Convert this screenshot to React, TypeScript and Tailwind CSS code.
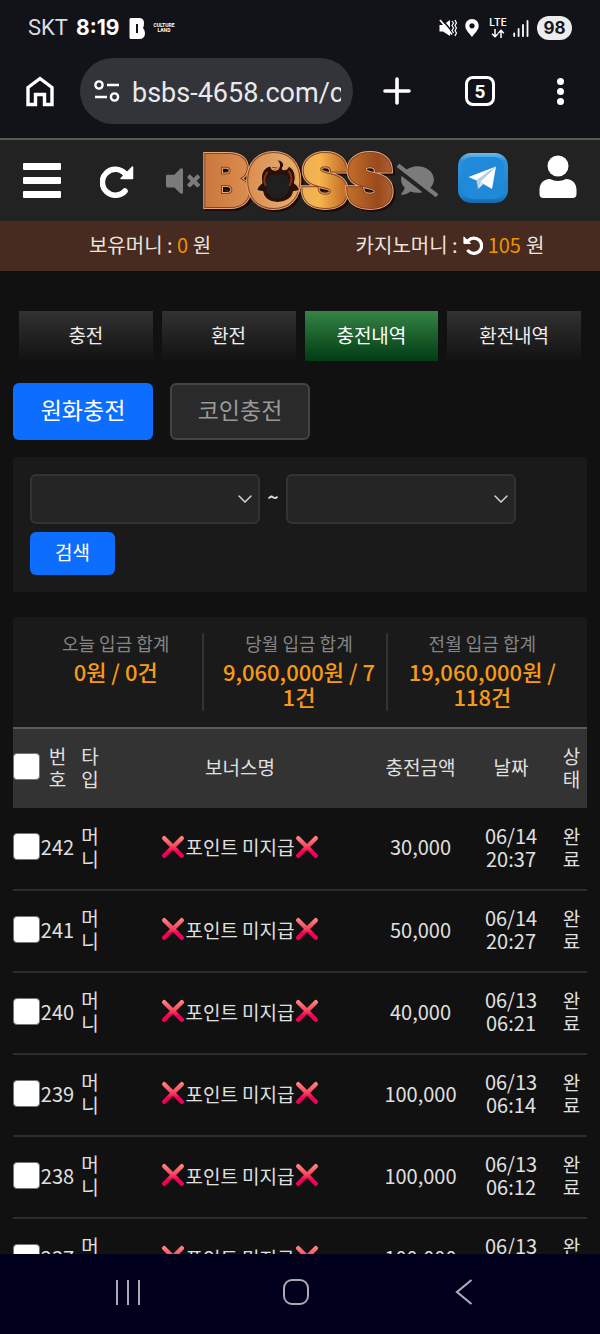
import React, { useState } from "react";
import { FaCommentSlash, FaVolumeMute } from "react-icons/fa";

const menuTabs = ["충전", "환전", "충전내역", "환전내역"];

const totals = [
  { label: "오늘 입금 합계", value: "0원 / 0건" },
  { label: "당월 입금 합계", value: "9,060,000원 / 71건" },
  { label: "전월 입금 합계", value: "19,060,000원 / 118건" },
];

const deposits = [
  { id: 242, amount: 30000, day: "06/14", time: "20:37" },
  { id: 241, amount: 50000, day: "06/14", time: "20:27" },
  { id: 240, amount: 40000, day: "06/13", time: "06:21" },
  { id: 239, amount: 100000, day: "06/13", time: "06:14" },
  { id: 238, amount: 100000, day: "06/13", time: "06:12" },
  { id: 237, amount: 100000, day: "06/13", time: "06:10" },
];

const ReloadIcon = ({ className }: { className?: string }) => (
  <svg viewBox="0 0 34 34" className={className} aria-hidden="true">
    <path
      d="M25 9.500 A13 13 0 1 0 25 27"
      fill="none"
      stroke="currentColor"
      strokeWidth="5.600"
      strokeLinecap="round"
    />
    <path
      d="M32.500 3 V14.500 H21 L24 11.500 L27 8.500 Z"
      fill="currentColor"
      stroke="currentColor"
      strokeWidth="1.500"
      strokeLinejoin="round"
    />
  </svg>
);

const CrossMark = () => (
  <svg viewBox="0 0 24 24" className="size-6 shrink-0" role="img" aria-label="X">
    <defs>
      <linearGradient id="cross" x1="0" y1="1" x2="0" y2="23" gradientUnits="userSpaceOnUse">
        <stop offset="0" stopColor="#ff8a80" />
        <stop offset="0.5" stopColor="#f8405c" />
        <stop offset="0.7" stopColor="#f50057" />
      </linearGradient>
    </defs>
    <path d="M3.2 3.2 L20.8 20.8 M20.8 3.2 L3.2 20.8" stroke="url(#cross)" strokeWidth="4.4" strokeLinecap="round" />
  </svg>
);

const BossLogo = () => {
  const letters = [
    { char: "B", x: 0 },
    { char: "O", x: 44 },
    { char: "S", x: 99 },
    { char: "S", x: 144 },
  ];

  return (
    <svg viewBox="0 0 195 60" className="w-full overflow-visible" role="img" aria-label="BOSS">
      <defs>
        <linearGradient id="copper" x1="0" y1="0" x2="195" y2="0" gradientUnits="userSpaceOnUse">
          <stop offset="0" stopColor="#c9763c" />
          <stop offset="0.2" stopColor="#d98a4d" />
          <stop offset="0.4" stopColor="#e3a468" />
          <stop offset="0.6" stopColor="#f5b64c" />
          <stop offset="0.72" stopColor="#c9742c" />
          <stop offset="0.9" stopColor="#9a4a1c" />
          <stop offset="1" stopColor="#b4683c" />
        </linearGradient>
      </defs>
      <g fontFamily="Inter, sans-serif" fontWeight="900" fontSize="70">
        {letters.map((l, i) => (
          <g key={i}>
            <text x={l.x + 2} y="57" fill="#1c0a05" stroke="#1c0a05" strokeWidth="6" aria-hidden="true">
              {l.char}
            </text>
            <text x={l.x} y="55" fill="#e2a878" stroke="#e2a878" strokeWidth="6" aria-hidden="true">
              {l.char}
            </text>
            <text x={l.x} y="55" fill="#8d4322" stroke="#8d4322" strokeWidth="4" aria-hidden="true">
              {l.char}
            </text>
            <text x={l.x} y="55" fill="url(#copper)" stroke="url(#copper)" strokeWidth="2">
              {l.char}
            </text>
          </g>
        ))}
      </g>
      {/* devil mask inside the O */}
      <path
        d="M74 9 C80 8 83 14 80 17 C79 19 84 20 86 15 C93 18 94 27 92 32 C95 34 97 37 97 40 L91 41 C90 48 82 52 75 52 C67 52 61 48 60 41 L54 40 C54 36 56 34 59 32 C57 23 61 15 69 15 C67 19 74 21 76 17 C78 14 76 11 74 9 Z"
        fill="#2a0f08"
        stroke="#e0a06c"
        strokeWidth="1.4"
      />
      <path d="M75 24 C83 22 88 27 87 34 C87 43 81 48 75 48 C68 48 63 42 63 34 C63 27 68 22 75 24 Z" fill="#1f1f1f" />
      <path d="M65 21 C61 26 61 31 63 35 M86 20 C90 25 89 31 87 35" fill="none" stroke="#7d3418" strokeWidth="2" />
    </svg>
  );
};

const StatusBar = () => (
  <div className="flex h-[58px] items-center justify-between px-7 pb-0.5 text-white">
    <div className="flex items-center font-[Roboto]">
      <span className="text-[22px] font-normal leading-7 text-[#dcdde0]">SKT</span>
      <span className="ml-2 font-[Inter] text-[21px] font-bold leading-7">8:19</span>
      <svg viewBox="0 0 16 21" className="ml-2.5 h-[21px] w-4" aria-hidden="true">
        <path
          fillRule="evenodd"
          fill="currentColor"
          d="M2 0 H10 Q15 0 15 5 Q15 8.500 14 10 Q16 12 16 15 Q16 21 10 21 H2 Q0.500 21 0.500 19.500 V1.500 Q0.500 0 2 0 Z M7 6 H9 V15 H7 Z"
        />
      </svg>
      <span className="ml-2 text-center text-[5px] font-bold leading-[5px]">
        CULTURE
        <br />
        LAND
      </span>
    </div>
    <div className="flex items-center">
      <svg viewBox="0 0 18 18" className="size-[18px]" aria-hidden="true">
        <path d="M0.500 6 H4 L11 1 V17 L4 12.500 H0.500 Z" fill="currentColor" />
        <path d="M3 0.500 L14 13.500" stroke="#121318" strokeWidth="1.600" />
        <path d="M1 1 L13 15.500" stroke="currentColor" strokeWidth="1.800" />
        <path
          d="M13 2 L14.500 4 L13 6.500 L14.500 9 L13 11.500 L14.500 14 M16 1 L17.400 4 L16 6.500 L17.400 9 L16 11.500 L17.400 14 L16 17"
          fill="none"
          stroke="currentColor"
          strokeWidth="1.200"
        />
      </svg>
      <svg viewBox="0 0 14 18" className="ml-2 h-[18px] w-3.5" aria-hidden="true">
        <path
          fillRule="evenodd"
          fill="currentColor"
          d="M7 0 C3 0 0.300 3 0.300 6.800 C0.300 11 4 14 7 18 C10 14 13.700 11 13.700 6.800 C13.700 3 11 0 7 0 Z M7 4.200 A2.600 2.600 0 1 1 7 9.400 A2.600 2.600 0 1 1 7 4.200 Z"
        />
      </svg>
      <div className="ml-2.5 flex w-[18px] flex-col items-center">
        <span className="font-[Inter] text-[10px] font-semibold leading-[9px]">LTE</span>
        <svg viewBox="0 0 14 9" className="mt-0.5 h-[9px] w-3.5" aria-hidden="true">
          <path
            d="M4 0 V7.500 M1 4.800 L4 7.800 L7 4.800 M10 9 V1.500 M7.200 4.200 L10 1.300 L12.800 4.200"
            fill="none"
            stroke="currentColor"
            strokeWidth="1.500"
          />
        </svg>
      </div>
      <svg viewBox="0 0 16 17" className="ml-1.5 h-[17px] w-4" aria-hidden="true">
        <path d="M1.200 13.500 V16 M5.600 9 V16 M10 5 V16 M14.500 1 V16" stroke="currentColor" strokeWidth="1.800" strokeLinecap="round" />
      </svg>
      <span className="ml-2 w-[35px] rounded-full bg-[#ececee] text-center font-[Inter] text-[17px] font-bold leading-6 text-[#17181c]">
        98
      </span>
    </div>
  </div>
);

const BrowserBar = () => {
  const [url, setUrl] = useState("bsbs-4658.com/c");

  return (
    <div className="flex h-20 items-start text-white">
      <button aria-label="홈" className="flex h-[66px] w-20 items-center justify-center">
        <svg viewBox="0 0 28 31" className="h-[31px] w-7" aria-hidden="true">
          <path d="M2 11.500 L14 2.500 L26 11.500 V28.500 H18.500 V18.500 H9.500 V28.500 H2 Z" fill="none" stroke="currentColor" strokeWidth="3.400" />
        </svg>
      </button>
      <div className="flex h-[66px] min-w-0 flex-1 items-center rounded-full bg-[#333439] pl-3.5 pr-3">
        <svg viewBox="0 0 26 22" className="h-[22px] w-[26px] shrink-0" aria-hidden="true">
          <g fill="none" stroke="currentColor" strokeWidth="2.400">
            <circle cx="5" cy="5" r="3.600" />
            <path d="M13 5 H25 M1 17 H13" />
            <circle cx="20.500" cy="17" r="3.600" />
          </g>
        </svg>
        <input
          type="text"
          aria-label="주소"
          value={url}
          onChange={(e) => setUrl(e.target.value)}
          className="ml-3 mt-1 h-10 min-w-0 flex-1 bg-transparent font-[Roboto] text-[27px] font-normal text-[#e9e9ec] outline-none"
        />
      </div>
      <button aria-label="새 탭" className="flex h-[66px] w-[87px] items-center justify-center">
        <svg viewBox="0 0 28 28" className="size-7" aria-hidden="true">
          <path d="M14 2 V26 M2 14 H26" stroke="currentColor" strokeWidth="3.600" strokeLinecap="round" />
        </svg>
      </button>
      <button className="flex h-[66px] w-20 items-center justify-center">
        <span className="flex size-[30px] items-center justify-center rounded-lg border-3 border-white font-[Roboto] text-[19px] font-bold leading-none">
          5
        </span>
      </button>
      <button aria-label="메뉴" className="flex h-[66px] w-20 flex-col items-center justify-center gap-[3px]">
        <span className="size-[7px] rounded-full bg-white" />
        <span className="size-[7px] rounded-full bg-white" />
        <span className="size-[7px] rounded-full bg-white" />
      </button>
    </div>
  );
};

const SiteHeader = () => (
  <header className="flex h-[81px] items-center bg-[#222] text-white">
    <button aria-label="전체메뉴" className="flex w-[84px] shrink-0 flex-col items-center gap-[7px]">
      <span className="h-[7px] w-[38px] rounded-[1px] bg-white" />
      <span className="h-[7px] w-[38px] rounded-[1px] bg-white" />
      <span className="h-[7px] w-[38px] rounded-[1px] bg-white" />
    </button>
    <button aria-label="새로고침" className="flex w-[66px] shrink-0 justify-center">
      <ReloadIcon className="size-[34px]" />
    </button>
    <button aria-label="소리 끄기" className="flex w-[53px] shrink-0 justify-end pr-[3px] text-[#7b7b7b]">
      <FaVolumeMute size={34} />
    </button>
    <a href="#" className="min-w-0 flex-1">
      <BossLogo />
    </a>
    <button aria-label="채팅 끄기" className="flex w-[41px] shrink-0 justify-center text-[#7b7b7b]">
      <FaCommentSlash size={41} />
    </button>
    <a href="#" aria-label="텔레그램" className="flex w-[90px] shrink-0 justify-center pb-1.5">
      <svg viewBox="0 0 50 50" className="size-[50px]" aria-hidden="true">
        <defs>
          <linearGradient id="tile" x1="0" y1="0" x2="0" y2="1">
            <stop offset="0" stopColor="#6cbcec" />
            <stop offset="0.15" stopColor="#2c93dc" />
            <stop offset="0.85" stopColor="#1d82d0" />
            <stop offset="1" stopColor="#1466ab" />
          </linearGradient>
        </defs>
        <rect width="50" height="50" rx="13" fill="url(#tile)" />
        <rect x="4" y="4" width="42" height="42" rx="10" fill="#2089d8" />
        <path d="M38 13.500 L10.500 24 L18.500 27.500 Z" fill="#fff" />
        <path d="M18.500 27.500 L38 13.500 L22 29 L20 36 Z" fill="#b9d3e6" />
        <path d="M38 13.500 L22 29 L34 36 Z" fill="#fff" />
        <path d="M22 29 L20 36 L25.500 31 Z" fill="#d9e8f3" />
      </svg>
    </a>
    <button aria-label="내 정보" className="flex w-[72px] shrink-0 justify-center pr-3 pb-2">
      <svg viewBox="0 0 38 43" className="h-[43px] w-[38px]" aria-hidden="true">
        <circle cx="19" cy="11" r="10.500" fill="currentColor" />
        <path d="M11 24 C16 26.500 22 26.500 27 24 C34 24 37.500 29 37.500 35 V39 Q37.500 43 33.500 43 H4.500 Q0.500 43 0.500 39 V35 C0.500 29 4 24 11 24 Z" fill="currentColor" />
      </svg>
    </button>
  </header>
);

const DateSelect = ({ label }: { label: string }) => (
  <div className="relative min-w-0 max-w-[230px] flex-1">
    <select
      aria-label={label}
      className="block h-[50px] w-full appearance-none rounded-md border-2 border-[#333] bg-[#252525] px-3"
    >
      <option value=""></option>
    </select>
    <svg viewBox="0 0 16 10" className="pointer-events-none absolute right-[7px] top-5 h-2.5 w-4" aria-hidden="true">
      <path d="M2 2 L8 8 L14 2" fill="none" stroke="#ddd" strokeWidth="1.400" strokeLinecap="round" />
    </svg>
  </div>
);

const DepositHistory = () => {
  const [activeTab, setActiveTab] = useState("충전내역");
  const [checked, setChecked] = useState<number[]>([]);

  const toggle = (id: number) =>
    setChecked((list) => (list.includes(id) ? list.filter((v) => v !== id) : [...list, id]));

  const boxClass =
    "block size-[27px] appearance-none rounded-[4px] border border-[#767676] bg-white checked:bg-[#0d6efd]";

  return (
    <div className="px-[13px] pt-10">
      <nav className="grid grid-cols-4 gap-[9px] px-1.5">
        {menuTabs.map((tab) => (
          <button
            key={tab}
            onClick={() => setActiveTab(tab)}
            className={
              activeTab === tab
                ? "h-[50px] bg-linear-to-b from-[#348546] to-[#013c14] pb-0.5 text-[19px] text-white"
                : "h-[50px] bg-linear-to-b from-[#323232] to-[#121212] pb-0.5 text-[19px] text-[#eee]"
            }
          >
            {tab}
          </button>
        ))}
      </nav>

      <div className="mt-[22px] flex gap-[17px]">
        <button className="h-[57px] w-[140px] rounded-md bg-[#0d6efd] pb-1 text-[23px] text-white">원화충전</button>
        <button className="h-[57px] w-[140px] rounded-md border-2 border-[#444] bg-[#2a2a2a] pb-1 text-[23px] text-[#999]">
          코인충전
        </button>
      </div>

      {/* Date range */}
      <form className="mt-[17px] bg-[#1a1a1a] p-[17px]" onSubmit={(e) => e.preventDefault()}>
        <div className="flex items-center">
          <DateSelect label="시작일" />
          <span className="w-[26px] pb-1 text-center text-xl font-medium leading-5">~</span>
          <DateSelect label="종료일" />
        </div>
        <button className="mt-2 h-[43px] w-[85px] rounded-md bg-[#0d6efd] pb-0.5 text-[19px] text-white">검색</button>
      </form>

      {/* Totals */}
      <div className="mt-[25px] bg-[#1a1a1a] py-4 pl-2 pr-4">
        <dl className="grid min-h-[78px] grid-cols-3">
          {totals.map((t) => (
            <div key={t.label} className="border-r-2 border-[#333] pl-4 pr-2 text-center last:border-transparent">
              <dt className="text-[18px] leading-5 text-[#858585]">{t.label}</dt>
              <dd className="mt-1.5 break-all text-[22px] font-medium leading-[25px] text-[#f79a18]">{t.value}</dd>
            </div>
          ))}
        </dl>
      </div>

      <table className="w-full table-fixed border-collapse text-center text-[19px] leading-[23px]">
        <colgroup>
          <col className="w-[27px]" />
          <col className="w-[35px]" />
          <col className="w-[30px]" />
          <col />
          <col className="w-[91px]" />
          <col className="w-[90px]" />
          <col className="w-[31px]" />
        </colgroup>
        <thead>
          <tr className="h-20 border-t-2 border-[#5a5a5a] bg-[#333]">
            <th className="pb-1">
              <input
                type="checkbox"
                aria-label="전체 선택"
                checked={checked.length === deposits.length}
                onChange={(e) => setChecked(e.target.checked ? deposits.map((d) => d.id) : [])}
                className={boxClass}
              />
            </th>
            <th className="px-2 pb-1 font-normal">번호</th>
            <th className="px-1 pb-1 font-normal">타입</th>
            <th className="pb-1 font-normal">보너스명</th>
            <th className="pb-1 font-normal">충전금액</th>
            <th className="pb-1 font-normal">날짜</th>
            <th className="px-1 pb-1 font-normal">상태</th>
          </tr>
        </thead>
        <tbody>
          {deposits.map((d) => (
            <tr key={d.id} className="h-[82px] border-b-2 border-[#2c2c2c]">
              <td className="pb-1">
                <input
                  type="checkbox"
                  aria-label={`${d.id} 선택`}
                  checked={checked.includes(d.id)}
                  onChange={() => toggle(d.id)}
                  className={boxClass}
                />
              </td>
              <td className="pb-1 text-[20px]">{d.id}</td>
              <td className="px-1 pb-1">머니</td>
              <td className="pb-1">
                <div className="flex items-center justify-center">
                  <CrossMark />
                  포인트 미지급
                  <CrossMark />
                </div>
              </td>
              <td className="pb-1 text-[20px]">{d.amount.toLocaleString("en-US")}</td>
              <td className="px-4 pb-1 text-[20px]">
                {d.day} {d.time}
              </td>
              <td className="px-1 pb-1">완료</td>
            </tr>
          ))}
        </tbody>
      </table>
    </div>
  );
};

const App = (): React.ReactNode => {
  return (
    <div className="flex h-screen flex-col bg-[#111] font-['Noto_Sans_CJK_KR',sans-serif] text-[#e0e0e0]">
      <div className="shrink-0 border-b-2 border-[#56575b] bg-[#121318]">
        <StatusBar />
        <BrowserBar />
      </div>

      <main className="min-h-0 flex-1 overflow-y-auto [scrollbar-width:none]">
        <SiteHeader />
        <div className="grid h-[50px] grid-cols-2 items-center bg-[#472b20] pb-0.5 text-center text-[20px] text-[#ece4de]">
          <p>
            보유머니 : <span className="text-[#f29200]">0</span> 원
          </p>
          <p className="flex items-center justify-center gap-[5px]">
            카지노머니 :
            <button aria-label="카지노머니 회수" className="text-white">
              <ReloadIcon className="size-5 -scale-x-100" />
            </button>
            <span className="text-[#f29200]">105</span> 원
          </p>
        </div>
        <DepositHistory />
      </main>

      <nav className="grid h-20 shrink-0 grid-cols-3 bg-[#00001c] pb-1 pl-11 pr-[52px] text-[#a9a9b8]">
        <button aria-label="최근 앱" className="flex items-center justify-center gap-[9px]">
          <span className="h-[25px] w-0.5 bg-current" />
          <span className="h-[25px] w-0.5 bg-current" />
          <span className="h-[25px] w-0.5 bg-current" />
        </button>
        <button aria-label="홈 화면" className="flex items-center justify-center">
          <span className="size-[26px] rounded-[9px] border-2 border-current" />
        </button>
        <button aria-label="뒤로" className="flex items-center justify-center">
          <svg viewBox="0 0 18 28" className="h-7 w-[18px]" aria-hidden="true">
            <path d="M16.500 2 L2 14 L16.500 26" fill="none" stroke="currentColor" strokeWidth="2.200" />
          </svg>
        </button>
      </nav>
    </div>
  );
};

export default App;
